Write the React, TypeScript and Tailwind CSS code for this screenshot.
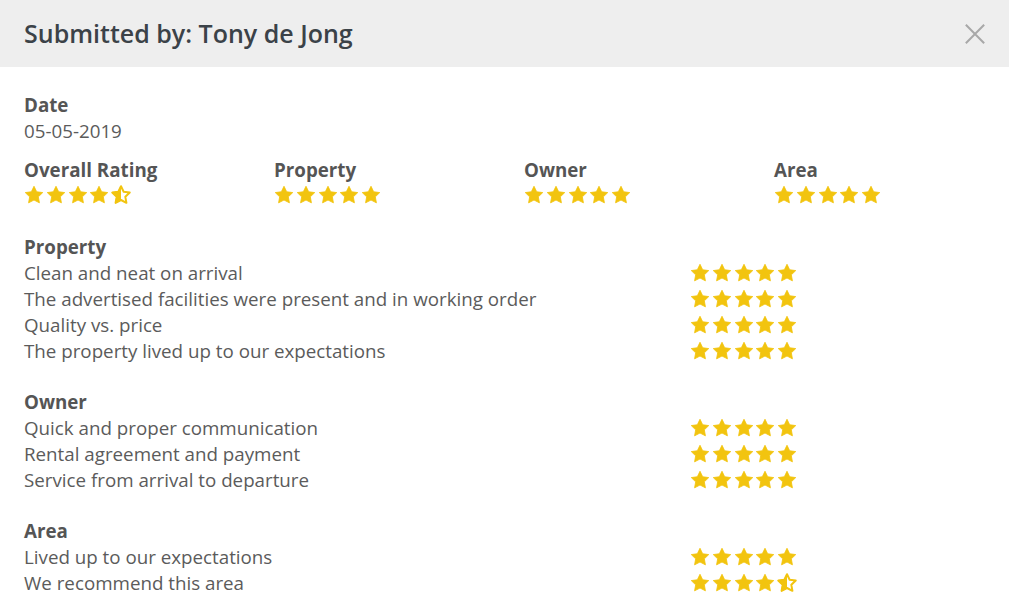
import React from "react";

const STAR = "12,1.5 15.2,8.1 22.5,9.1 17.2,14.2 18.5,21.4 12,18 5.5,21.4 6.8,14.2 1.5,9.1 8.8,8.1";

function Star({ half, id }: { half?: boolean; id: string }) {
  if (!half) {
    return (
      <svg viewBox="0 0 24 24" className="w-[20px] h-[20px]">
        <polygon points={STAR} fill="#f2c40f" stroke="#f2c40f" strokeWidth="1" strokeLinejoin="round" />
      </svg>
    );
  }
  return (
    <svg viewBox="0 0 24 24" className="w-[20px] h-[20px]">
      <defs>
        <clipPath id={id}>
          <rect x="0" y="0" width="12" height="24" />
        </clipPath>
      </defs>
      <polygon points={STAR} fill="none" stroke="#f2c40f" strokeWidth="2.4" strokeLinejoin="round" />
      <polygon points={STAR} fill="#f2c40f" stroke="#f2c40f" strokeWidth="1" clipPath={`url(#${id})`} />
    </svg>
  );
}

function Stars({ value, id }: { value: number; id: string }) {
  return (
    <div className="flex items-center gap-[1.75px] h-6">
      {[1, 2, 3, 4, 5].map((n) => (
        <Star key={n} id={`${id}-${n}`} half={value < n && value > n - 1} />
      ))}
    </div>
  );
}

const summary = [
  { label: "Overall Rating", value: 4.5 },
  { label: "Property", value: 5 },
  { label: "Owner", value: 5 },
  { label: "Area", value: 5 },
];

const sections = [
  {
    title: "Property",
    rows: [
      { label: "Clean and neat on arrival", value: 5 },
      { label: "The advertised facilities were present and in working order", value: 5 },
      { label: "Quality vs. price", value: 5 },
      { label: "The property lived up to our expectations", value: 5 },
    ],
  },
  {
    title: "Owner",
    rows: [
      { label: "Quick and proper communication", value: 5 },
      { label: "Rental agreement and payment", value: 5 },
      { label: "Service from arrival to departure", value: 5 },
    ],
  },
  {
    title: "Area",
    rows: [
      { label: "Lived up to our expectations", value: 5 },
      { label: "We recommend this area", value: 4.5 },
    ],
  },
];

export default function App() {
  return (
    <div className="w-[1009px] h-[612px] bg-white overflow-hidden font-['Open_Sans',sans-serif] text-[#5b5b5b]">
      {/* Header */}
      <div className="h-[67px] bg-[#eeeeee] flex items-center justify-between pl-6 pr-[23px]">
        <h1 className="text-[25px] font-semibold text-[#3b4248] leading-none">Submitted by: Tony de Jong</h1>
        <svg viewBox="0 0 24 24" className="w-[22px] h-[22px]">
          <path d="M2 2 L22 22 M22 2 L2 22" stroke="#a8a8a8" strokeWidth="2.2" />
        </svg>
      </div>

      <div className="px-6 pt-[25px] text-[18.75px] leading-[26px]">
        <div className="font-bold text-[#555]">Date</div>
        <div>05-05-2019</div>

        <div className="grid grid-cols-[250px_250px_250px_250px] mt-[13px]">
          {summary.map((s, i) => (
            <div key={s.label}>
              <div className="font-bold text-[#555]">{s.label}</div>
              <Stars value={s.value} id={`sum${i}`} />
            </div>
          ))}
        </div>

        {sections.map((sec, si) => (
          <div key={sec.title} className={si === 0 ? "mt-[27px]" : "mt-[25px]"}>
            <div className="font-bold text-[#555]">{sec.title}</div>
            {sec.rows.map((r, ri) => (
              <div key={r.label} className="flex items-center h-[26px]">
                <div className="w-[666px]">{r.label}</div>
                <Stars value={r.value} id={`s${si}-${ri}`} />
              </div>
            ))}
          </div>
        ))}
      </div>
    </div>
  );
}
